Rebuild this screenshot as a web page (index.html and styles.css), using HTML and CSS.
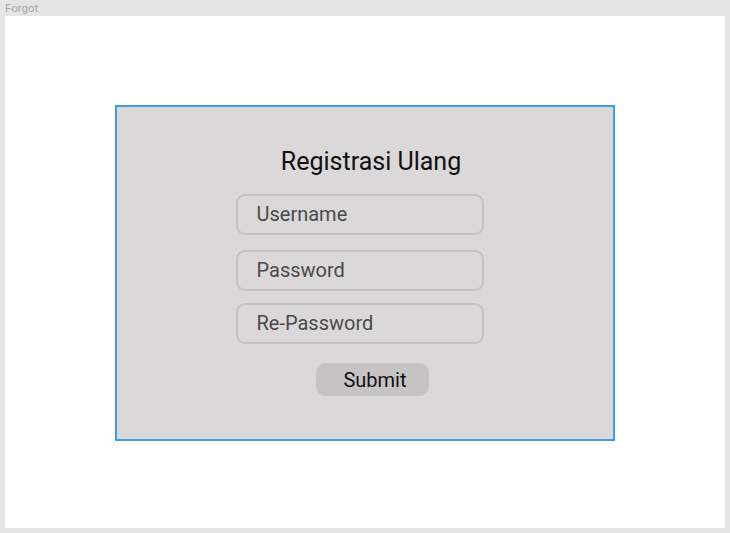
FILE: index.html
```html
<html>
<head>
<link rel="stylesheet" href="styles.css">
<title>Forgot</title>
</head>
<body>
<div class=label>Forgot</div>
<div class=frame>
	<div class=box>
		<h2 class=title>Registrasi Ulang</h2>
		<div class=field>Username</div>
		<div class="field f2">Password</div>
		<div class="field f3">Re-Password</div>
		<div class=btn>Submit</div>
	</div>
</div>
</body>
</html>
```

FILE: styles.css
```css
body{margin:0; background:#e5e5e5; font-family:Roboto, "Liberation Sans", sans-serif;}
.label{height:16px; padding-left:5px; font-size:11.5px; line-height:16px; color:#a8a8a8;}
.frame{margin:0 5px; height:512px; background:#fff; padding-top:89px; box-sizing:border-box;}
.box{margin-left:110px; width:496px; height:332px; border:2px solid #3a9fe4; background:#dad8d9; display:flex; flex-direction:column; align-items:center;}
.title{margin:40px 0 0 12px; font-weight:normal; font-size:25px; line-height:30px; color:#111;}
.field{margin:17px 0 0 -11px; width:244px; height:37px; border:2px solid #c3c1c2; border-radius:9px; font-size:20px; line-height:37px; color:#4a4a4a; text-indent:19px;}
.f2{margin-top:15px;}
.f3{margin-top:12px;}
.btn{margin:19px 0 0 14px; width:107px; height:33px; padding-left:6px; border-radius:9px; background:#c5c3c4; text-align:center; font-size:20px; line-height:35px; color:#111;}
```
